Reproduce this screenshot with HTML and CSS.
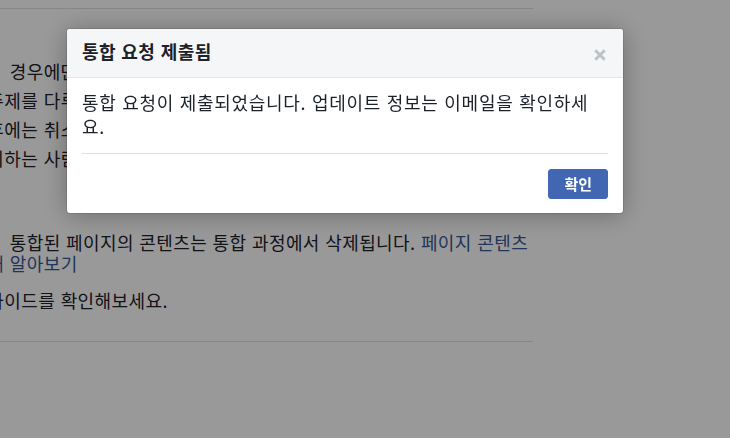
FILE: index.html
```html
<!DOCTYPE html>
<html lang="ko">
<head>
<meta charset="utf-8">
<title>통합 요청 제출됨</title>
<link rel="stylesheet" href="styles.css">
</head>
<body>
<main class="page">
  <div class="rule rule-top"></div>
  <ul class="rules-list">
    <li>동일&emsp;&ensp;경우에만 페이지를 통합할 수 있습니다.</li>
    <li>동일 주제를 다루는 페이지만 통합할 수 있습니다.</li>
    <li>통합 후에는 취소할 수 없습니다.</li>
    <li>를 관리하는 사람만 요청할 수 있습니다.</li>
  </ul>
  <p class="para">참고&emsp;&ensp;통합된 페이지의 콘텐츠는 통합 과정에서 삭제됩니다. <a class="link" href="#">페이지 콘텐츠에 대해 알아보기</a></p>
  <p class="para para-second">관련 가이드를 확인해보세요.</p>
  <div class="rule rule-bottom"></div>
</main>

<div class="overlay">
  <section class="dialog" role="dialog" aria-labelledby="dlg-title">
    <header class="dialog-header">
      <h2 id="dlg-title" class="dialog-title">통합 요청 제출됨</h2>
      <button class="close" aria-label="닫기">
        <svg width="12" height="12" viewBox="0 0 12 12"><path d="M1.3 1.3 L10.7 10.7 M10.7 1.3 L1.3 10.7" stroke="#bec3c9" stroke-width="3" stroke-linecap="butt"/></svg>
      </button>
    </header>
    <div class="dialog-body">통합 요청이 제출되었습니다. 업데이트 정보는 이메일을 확인하세요.</div>
    <footer class="dialog-footer">
      <button class="btn-primary">확인</button>
    </footer>
  </section>
</div>
</body>
</html>
```

FILE: styles.css
```css
html, body {
  margin: 0;
  padding: 0;
  background: #ffffff;
}
body {
  font-family: "Noto Sans CJK KR", "Noto Sans", sans-serif;
  color: #1d2129;
  width: 730px;
  height: 438px;
  overflow: hidden;
}
.page {
  margin-left: -52px;
  width: 586px;
  padding-top: 8px;
  font-size: 18px;
  letter-spacing: 0.4px;
  line-height: 21px;
}
.rule {
  border-top: 1px solid #dddfe2;
  margin-right: 1px;
}
.rules-list {
  list-style: none;
  margin: 52px 0 0 0;
  padding: 0;
}
.rules-list li {
  white-space: nowrap;
  margin-bottom: 8px;
}
.para {
  margin: 63px 0 0 0;
}
.para-second {
  margin-top: 16px;
}
.link {
  color: #385898;
  text-decoration: none;
}
.rule-bottom {
  margin-top: 30px;
}

.overlay {
  position: fixed;
  inset: 0;
  background: rgba(0, 0, 0, 0.4);
}
.dialog {
  margin: 29px 0 0 67px;
  width: 556px;
  background: #ffffff;
  border-radius: 3px;
  box-shadow: 0 2px 26px rgba(0, 0, 0, 0.3), 0 0 0 1px rgba(0, 0, 0, 0.1);
  overflow: hidden;
}
.dialog-header {
  height: 48px;
  background: #f5f6f7;
  border-bottom: 1px solid #e5e5e5;
  display: flex;
  align-items: center;
  justify-content: space-between;
  padding: 0 15px;
}
.dialog-title {
  margin: 0;
  font-size: 18px;
  letter-spacing: 0.4px;
  font-weight: 700;
  line-height: 21px;
  color: #1d2129;
  padding-bottom: 4px;
}
.close {
  border: 0;
  background: transparent;
  padding: 0;
  width: 12px;
  height: 12px;
  margin: 4px 2px 0 0;
  display: flex;
}
.dialog-body {
  padding: 12px 15px 15px;
  font-size: 18px;
  letter-spacing: 0.7px;
  line-height: 24px;
  color: #1d2129;
}
.dialog-footer {
  margin: 0 15px;
  border-top: 1px solid #dddfe2;
  padding: 15px 0 14px;
  display: flex;
  justify-content: flex-end;
}
.btn-primary {
  font-family: "Noto Sans CJK KR", "Noto Sans", sans-serif;
  font-size: 15px;
  font-weight: 700;
  color: #ffffff;
  background: #4267b2;
  border: 1px solid #4267b2;
  border-radius: 3px;
  height: 30px;
  padding: 0 15px;
  line-height: 28px;
}
```
